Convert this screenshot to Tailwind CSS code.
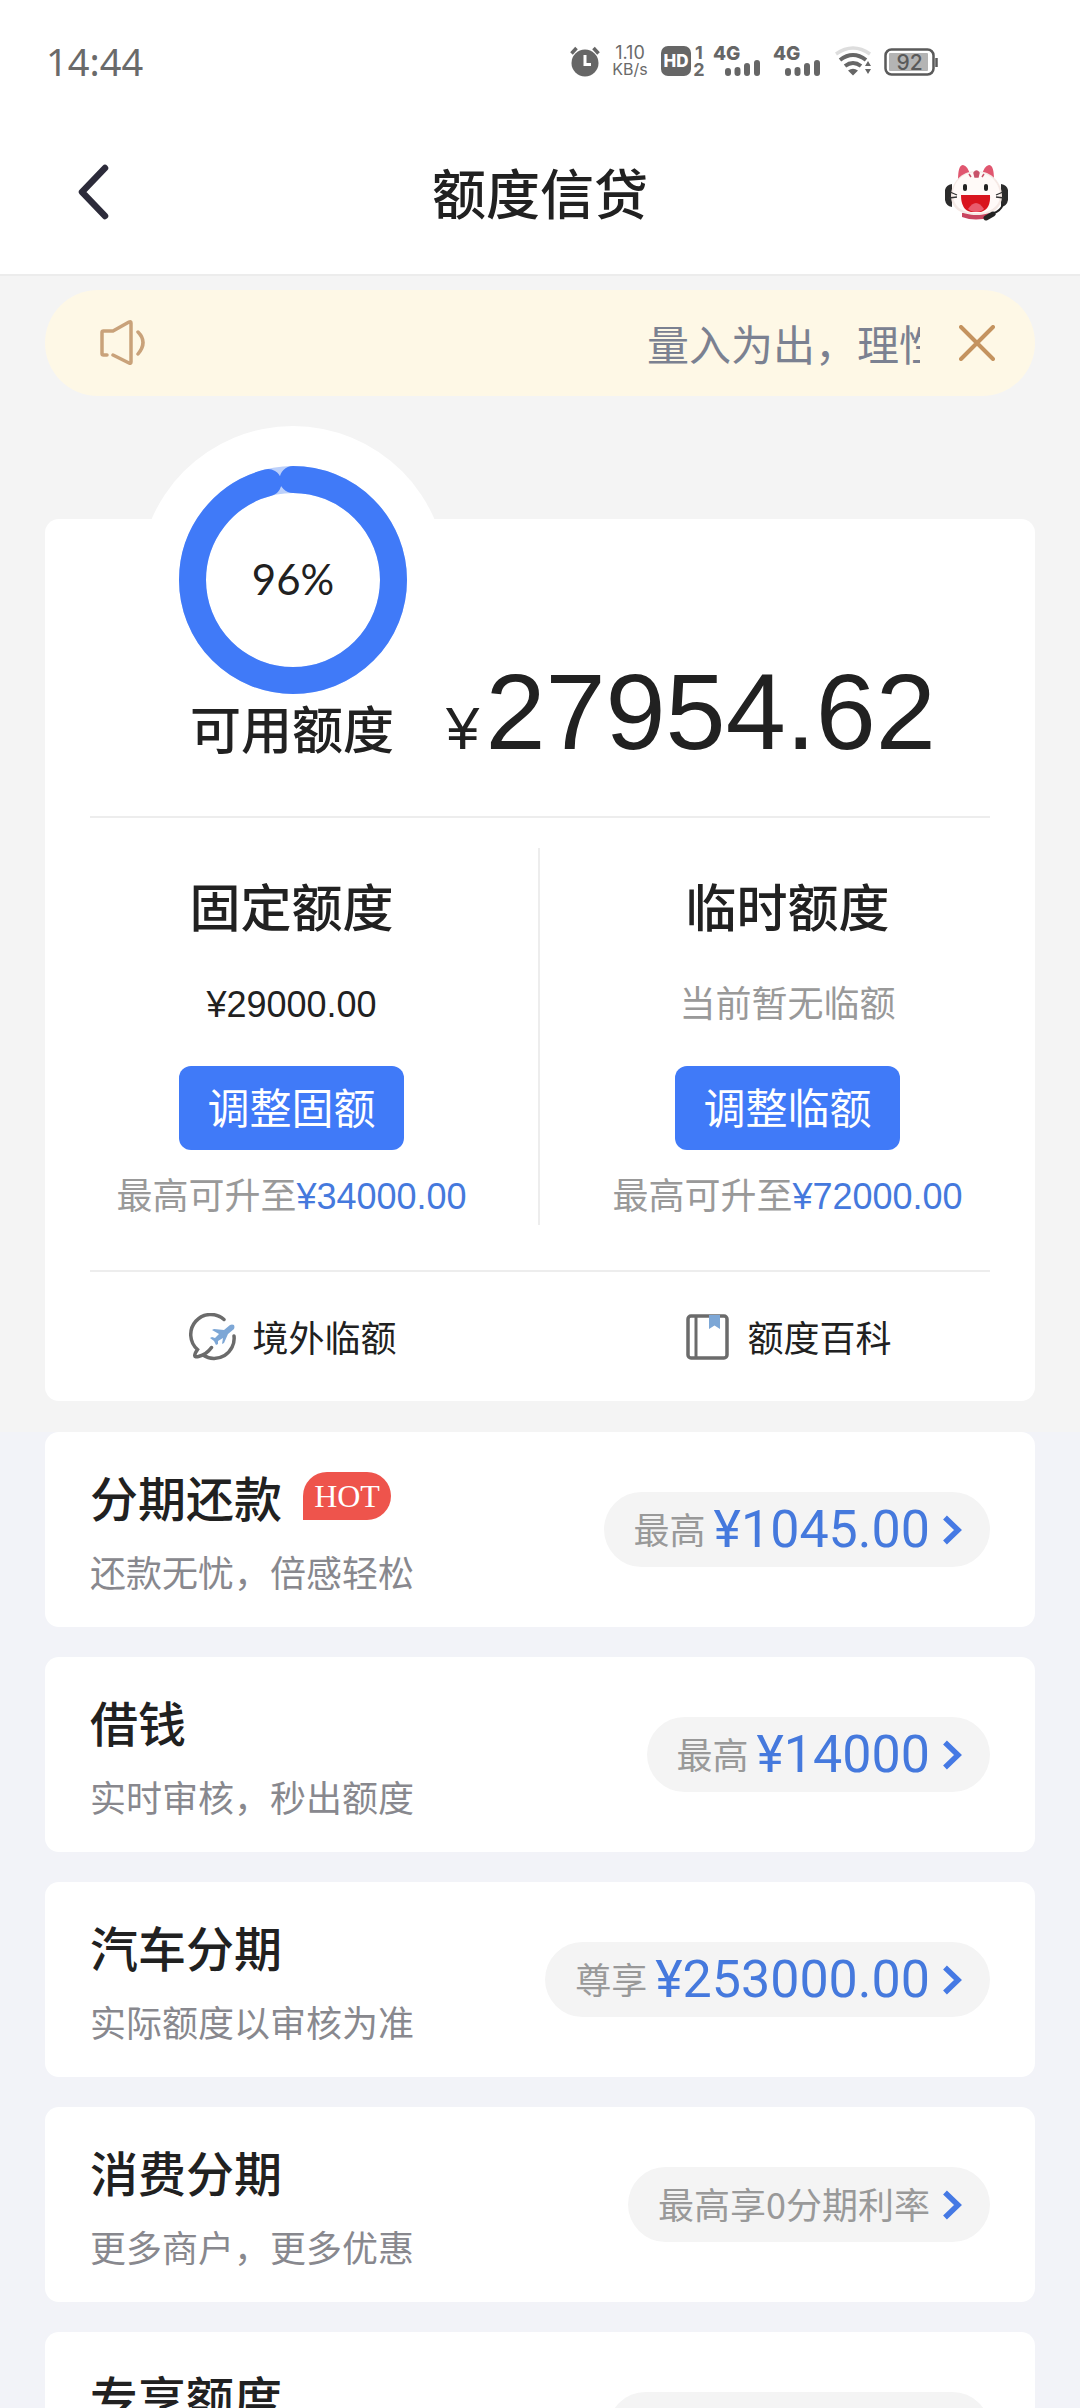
<!DOCTYPE html>
<html lang="zh-CN">
<head>
<meta charset="utf-8">
<meta name="viewport" content="width=device-width, initial-scale=1">
<title>额度信贷</title>
<script src="https://cdn.jsdelivr.net/npm/@tailwindcss/browser@4"></script>
</head>
<body class="flex h-screen flex-col overflow-hidden bg-[#f2f3f8] font-['Noto_Sans_CJK_SC',sans-serif] text-[#212121]">

<header class="shrink-0 border-b-2 border-[#ececec] bg-white pb-3">
  <!-- status bar -->
  <div class="flex h-[122px] items-center justify-between pr-[141px] pl-[46px] text-[#6a6a6a]">
    <span class="font-['Noto_Sans'] text-[38px]">14:44</span>
    <div class="flex h-8 items-center">
      <svg class="h-8 w-8" viewBox="0 0 32 32" aria-label="闹钟">
        <circle cx="16" cy="18" r="13.5" fill="#666"/>
        <path d="M2.500 8.500l5-5.500M29.500 8.500l-5-5.500" stroke="#666" stroke-width="3.500"/>
        <path d="M16 10v9.500h6" fill="none" stroke="#fff" stroke-width="3"/>
      </svg>
      <div class="ml-2.5 w-[38px] text-center font-['Inter']">
        <div class="text-[18px] leading-[17px]">1.10</div><div class="text-[16px] leading-[17px]">KB/s</div>
      </div>
      <div class="ml-3 flex h-[30px] w-[30px] items-center justify-center rounded-[7px] bg-[#666] font-['Inter'] text-[17px] leading-none font-extrabold text-white">HD</div>
      <div class="ml-0.5 w-3 text-center font-['Inter'] text-[18px] leading-[17px] font-bold"><div>1</div><div>2</div></div>
      <svg class="ml-2 h-8 w-12 overflow-visible" viewBox="0 0 48 32" aria-label="信号一">
        <text x="0" y="15" font-family="Inter" font-size="19" font-weight="800" fill="#666">4G</text>
        <path d="M15 26v2M24.500 25v3M34 21v7M44 18v10" stroke="#666" stroke-width="6" stroke-linecap="round"/>
      </svg>
      <svg class="ml-3 h-8 w-12 overflow-visible" viewBox="0 0 48 32" aria-label="信号二">
        <text x="0" y="15" font-family="Inter" font-size="19" font-weight="800" fill="#666">4G</text>
        <path d="M15 26v2M24.500 25v3M34 21v7M44 18v10" stroke="#666" stroke-width="6" stroke-linecap="round"/>
      </svg>
      <svg class="ml-3.5 h-8 w-9" viewBox="0 0 36 32" aria-label="无线网络">
        <path d="M1 9Q18-3 35 9" fill="none" stroke="#ddd" stroke-width="3.500"/>
        <path d="M5 15Q18 5 31 15M10 21Q18 15 26 21" fill="none" stroke="#666" stroke-width="4"/>
        <path d="M13 25.500q5-3.500 10 0l-5 5zM30 21l3-5 3 5zM30 24h6l-3 5z" fill="#666"/>
      </svg>
      <svg class="ml-3 h-8 w-[56px]" viewBox="0 0 56 32" aria-label="电量">
        <rect x="2.500" y="4.500" width="48" height="25" rx="6" fill="#fff" stroke="#5a5a5a" stroke-width="2.500"/>
        <rect x="6" y="8" width="39" height="18" rx="1" fill="#b4b4b4"/>
        <path d="M53.500 13v9" stroke="#5a5a5a" stroke-width="2.500"/>
        <text x="26.500" y="24.500" text-anchor="middle" font-family="Inter" font-size="21" font-weight="500" fill="#5a5a5a">92</text>
      </svg>
    </div>
  </div>
  <!-- title bar -->
  <div class="flex h-[140px] items-center justify-between px-[72px]">
    <button type="button" aria-label="返回" class="w-[63px]">
      <svg class="h-[60px] w-10" viewBox="0 0 40 60"><path d="M33 6L10 30l23 24" fill="none" stroke="#2c2b3a" stroke-width="6.500" stroke-linecap="round" stroke-linejoin="round"/></svg>
    </button>
    <h1 class="text-[54px] leading-[78px] font-medium">额度信贷</h1>
    <button type="button" aria-label="客服">
      <svg class="h-[57px] w-[63px]" viewBox="0 0 63 57">
        <path d="M13 16Q13 1 18 1q5 1 7 10zM49 16Q49 1 44 1q-5 1-7 10z" fill="#e0566f"/>
        <path d="M7 20q-6 1-7 6v10q1 6 7 7zM56 20q6 1 7 6v10q-1 6-7 7z" fill="#2c2c2c"/>
        <path d="M17 49q14-3 28 0v4q-14 5-28 0z" fill="#c94560"/>
        <path d="M31.500 7C47 7 57 19 57 32S46 51 31.500 51 6 45 6 32 16 7 31.500 7z" fill="#f5e9e5"/>
        <path d="M31.500 8C44 8 54 18 55 30S45 49 31.500 49 8 43 8 30 19 8 31.500 8z" fill="#fffaf8"/>
        <path d="M29 9q2.500-4 5 0l-1 4h-3zM24 10l2 3M39 10l-2 3" fill="#c8536a" stroke="#c8536a" stroke-width="1.500"/>
        <rect x="18" y="20" width="4" height="7" rx="2" fill="#222"/><rect x="39" y="20" width="4" height="7" rx="2" fill="#222"/>
        <path d="M16 31h29q1 14-9 17h-10q-10-2-10-17z" fill="#d9141e"/>
        <path d="M23 45q8-12 16 0-3 3-8 3t-8-3z" fill="#e95b6d"/>
        <path d="M5 28l7 3M4 34l8-1M58 28l-7 3M59 34l-8-1" stroke="#333" stroke-width="1.300"/>
        <path d="M58 40q-2 7-11 10" fill="none" stroke="#222" stroke-width="2"/><path d="M41 54l7-4" stroke="#222" stroke-width="5" stroke-linecap="round"/>
      </svg>
    </button>
  </div>
</header>

<main class="min-h-0 flex-1 overflow-hidden">
  <section class="bg-[#f4f4f4] px-[45px] pt-[14px] pb-[31px]">
    <!-- scrolling notice -->
    <div class="flex h-[106px] items-center rounded-full bg-[#fef8e6] pr-10 pl-[54px]">
      <svg class="h-12 w-12" viewBox="0 0 48 48" aria-hidden="true">
        <path d="M8 36H4.500q-1.500 0-1.500-1.500v-21Q3 12 4.500 12H14L30 3q2-1 2 1v39q0 2-2 1L14 36M39 13q10 10 0 22" fill="none" stroke="#c9a27a" stroke-width="3.500" stroke-linecap="round" stroke-linejoin="round"/>
      </svg>
      <p class="ml-auto w-[273px] overflow-hidden text-[42px] leading-[62px] whitespace-nowrap text-[#7b8191]">量入为出，理性消费</p>
      <button type="button" aria-label="关闭通知" class="ml-[39px]">
        <svg class="h-9 w-9" viewBox="0 0 36 36"><path d="M2 2l32 32M34 2L2 34" stroke="#c4935f" stroke-width="4" stroke-linecap="round"/></svg>
      </button>
    </div>

    <!-- credit overview -->
    <div class="relative mt-[123px] rounded-[14px] bg-white">
      <div class="absolute -top-[93px] left-0 flex w-1/2 justify-center">
        <div class="flex h-[308px] w-[308px] items-center justify-center rounded-full bg-white">
          <svg class="h-[228px] w-[228px]" viewBox="0 0 228 228" role="img" aria-label="96%">
            <circle cx="114" cy="114" r="100.500" fill="none" stroke="#bcd0fa" stroke-width="27"/>
            <circle cx="114" cy="114" r="100.500" fill="none" stroke="#407af8" stroke-width="27" stroke-linecap="round" pathLength="100" stroke-dasharray="96 100" transform="rotate(-90 114 114)"/>
            <text x="114" y="129" text-anchor="middle" font-family="Lato" font-size="42" fill="#212121">96%</text>
          </svg>
        </div>
      </div>
      <div class="relative flex items-baseline pt-[139px] pb-[50px] pl-[145px] leading-none whitespace-nowrap">
        <span class="text-[51px] font-medium">可用额度</span>
        <span class="ml-[52px] font-['Liberation_Sans'] text-[60px]">¥</span>
        <span class="ml-[6px] font-['Liberation_Sans'] text-[108px]">27954.62</span>
      </div>
      <div class="mx-[45px] border-t-2 border-[#ededed]"></div>
      <div class="mt-[30px] mb-[45px] grid grid-cols-2 text-center">
        <div class="flex flex-col items-center border-r-2 border-[#ededed] pt-[21px] pb-[5px]">
          <h2 class="text-[51px] leading-[72px] font-medium">固定额度</h2>
          <p class="mt-[33px] text-[36px] leading-[54px]"><span class="font-['Liberation_Sans'] leading-none">¥29000.00</span></p>
          <button type="button" class="mt-[38px] h-[84px] w-[225px] rounded-xl bg-[#407af8] pb-1 text-[42px] leading-[80px] text-white">调整固额</button>
          <p class="mt-4 text-[36px] leading-[54px] text-[#999]">最高可升至<span class="font-['Liberation_Sans'] leading-none text-[#4579dd]">¥34000.00</span></p>
        </div>
        <div class="flex flex-col items-center pt-[21px] pb-[5px]">
          <h2 class="text-[51px] leading-[72px] font-medium">临时额度</h2>
          <p class="mt-[33px] text-[36px] leading-[54px] text-[#999]">当前暂无临额</p>
          <button type="button" class="mt-[38px] h-[84px] w-[225px] rounded-xl bg-[#407af8] pb-1 text-[42px] leading-[80px] text-white">调整临额</button>
          <p class="mt-4 text-[36px] leading-[54px] text-[#999]">最高可升至<span class="font-['Liberation_Sans'] leading-none text-[#4579dd]">¥72000.00</span></p>
        </div>
      </div>
      <div class="mx-[45px] border-t-2 border-[#ededed]"></div>
      <nav class="grid h-[129px] grid-cols-2">
        <a href="#" class="flex items-center justify-center gap-4 text-[36px]">
          <svg class="h-12 w-12" viewBox="0 0 48 48" aria-hidden="true">
            <path d="M36 6.500A19 19 0 0 0 9.500 36.500q-6 9 1 7 8-2 13-9M15 42A20 20 0 0 0 46 23" fill="none" stroke="#6b6b6b" stroke-width="3.500" stroke-linecap="round"/>
            <path d="M46 12q-2-1-4 0l-6 5-10-1-2 1 7 4-4 4-3-1-2 1 4 3 2 4 2-1v-3l5-3-1 6 2-1 4-9 6-5q1-2 0-4z" fill="#7da7d6"/>
          </svg><span class="pb-0.5">境外临额</span>
        </a>
        <a href="#" class="flex items-center justify-center gap-4 text-[36px]">
          <svg class="h-12 w-12" viewBox="0 0 48 48" aria-hidden="true">
            <rect x="5" y="3" width="39" height="42" rx="3" fill="none" stroke="#6b6b6b" stroke-width="3.500"/>
            <path d="M13 3v42" stroke="#6b6b6b" stroke-width="3"/>
            <path d="M26 2h11v14l-5.500-3.500L26 16z" fill="#7da7d6"/>
          </svg><span class="pb-0.5">额度百科</span>
        </a>
      </nav>
    </div>
  </section>

  <!-- credit products -->
  <section class="flex flex-col gap-[30px] px-[45px] pb-[30px]">
    <article class="flex items-center justify-between rounded-[14px] bg-white px-[45px]">
      <div class="pt-[28px] pb-[29px]">
        <h2 class="flex items-center text-[48px] leading-[72px] font-medium">分期还款<span class="ml-[21px] flex h-12 w-[88px] items-center justify-center rounded-3xl rounded-bl-none bg-[#ee544c] font-['Liberation_Serif'] text-[32px] leading-none font-normal text-white">HOT</span></h2>
        <p class="mt-3 text-[36px] leading-[54px] text-[#88888e]">还款无忧，倍感轻松</p>
      </div>
      <a href="#" class="flex h-[75px] items-center rounded-full bg-[#f4f4f4] pr-7 pl-[30px] text-[36px] text-[#999]"><span class="pb-1">最高</span><span class="ml-2 font-['Roboto'] text-[52px] leading-none text-[#4579dd]">¥1045.00</span><svg class="ml-3 h-[30px] w-5" viewBox="0 0 20 30" aria-hidden="true"><path d="M3 2.500L16 15 3 27.500" fill="none" stroke="#4579e4" stroke-width="5.500"/></svg></a>
    </article>
    <article class="flex items-center justify-between rounded-[14px] bg-white px-[45px]">
      <div class="pt-[28px] pb-[29px]">
        <h2 class="text-[48px] leading-[72px] font-medium">借钱</h2>
        <p class="mt-3 text-[36px] leading-[54px] text-[#88888e]">实时审核，秒出额度</p>
      </div>
      <a href="#" class="flex h-[75px] items-center rounded-full bg-[#f4f4f4] pr-7 pl-[30px] text-[36px] text-[#999]"><span class="pb-1">最高</span><span class="ml-2 font-['Roboto'] text-[52px] leading-none text-[#4579dd]">¥14000</span><svg class="ml-3 h-[30px] w-5" viewBox="0 0 20 30" aria-hidden="true"><path d="M3 2.500L16 15 3 27.500" fill="none" stroke="#4579e4" stroke-width="5.500"/></svg></a>
    </article>
    <article class="flex items-center justify-between rounded-[14px] bg-white px-[45px]">
      <div class="pt-[28px] pb-[29px]">
        <h2 class="text-[48px] leading-[72px] font-medium">汽车分期</h2>
        <p class="mt-3 text-[36px] leading-[54px] text-[#88888e]">实际额度以审核为准</p>
      </div>
      <a href="#" class="flex h-[75px] items-center rounded-full bg-[#f4f4f4] pr-7 pl-[30px] text-[36px] text-[#999]"><span class="pb-1">尊享</span><span class="ml-2 font-['Roboto'] text-[52px] leading-none text-[#4579dd]">¥253000.00</span><svg class="ml-3 h-[30px] w-5" viewBox="0 0 20 30" aria-hidden="true"><path d="M3 2.500L16 15 3 27.500" fill="none" stroke="#4579e4" stroke-width="5.500"/></svg></a>
    </article>
    <article class="flex items-center justify-between rounded-[14px] bg-white px-[45px]">
      <div class="pt-[28px] pb-[29px]">
        <h2 class="text-[48px] leading-[72px] font-medium">消费分期</h2>
        <p class="mt-3 text-[36px] leading-[54px] text-[#88888e]">更多商户，更多优惠</p>
      </div>
      <a href="#" class="flex h-[75px] items-center rounded-full bg-[#f4f4f4] pr-7 pl-[30px] text-[36px] text-[#999]"><span class="pb-1">最高享0分期利率</span><svg class="ml-3 h-[30px] w-5" viewBox="0 0 20 30" aria-hidden="true"><path d="M3 2.500L16 15 3 27.500" fill="none" stroke="#4579e4" stroke-width="5.500"/></svg></a>
    </article>
    <article class="flex h-[195px] items-center justify-between rounded-[14px] bg-white px-[45px]">
      <h2 class="self-start pt-[28px] text-[48px] leading-[72px] font-medium">专享额度</h2>
      <a href="#" aria-label="专享额度" class="flex h-[75px] w-[382px] items-center justify-end rounded-full bg-[#f4f4f4] pr-7"><svg class="h-[30px] w-5" viewBox="0 0 20 30" aria-hidden="true"><path d="M3 2.500L16 15 3 27.500" fill="none" stroke="#4579e4" stroke-width="5.500"/></svg></a>
    </article>
  </section>
</main>
</body>
</html>
